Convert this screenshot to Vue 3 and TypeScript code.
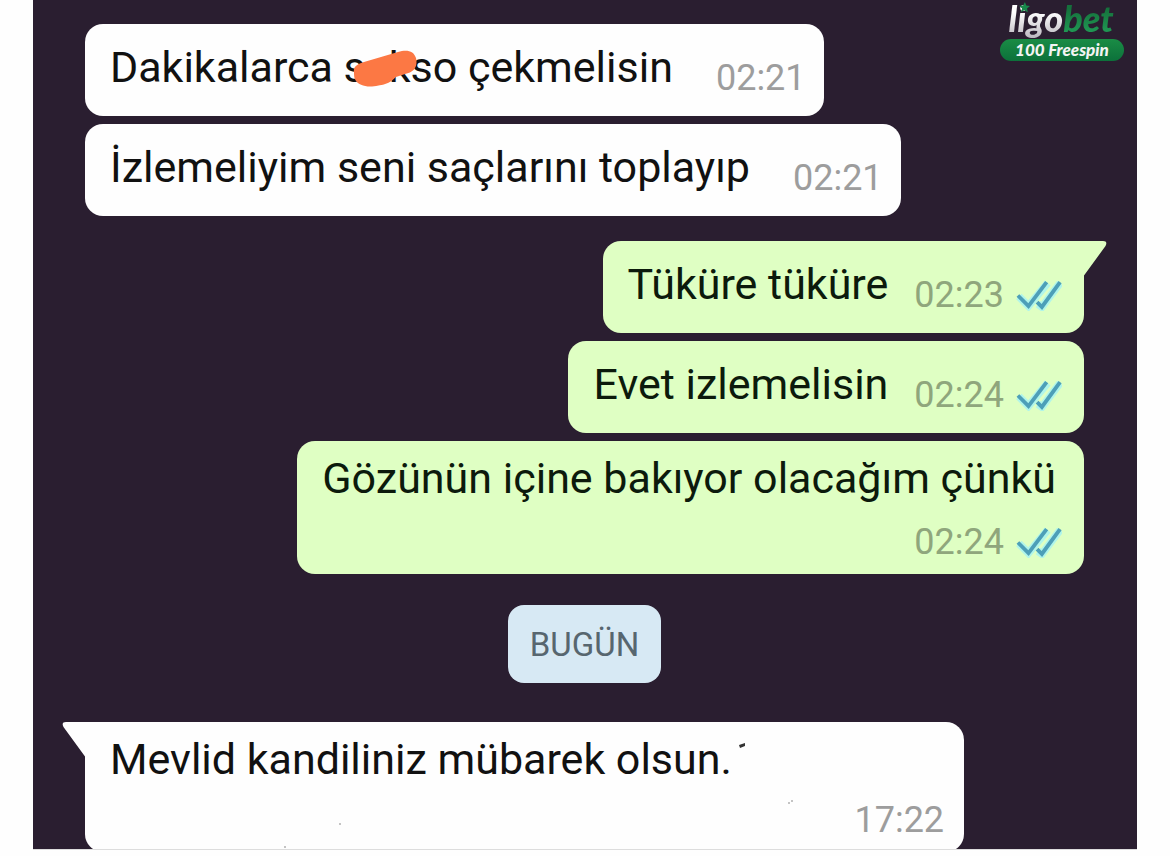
<script setup lang="ts">
interface Message {
  id: number
  parts: string[]
  time: string
  mine: boolean
  startsGroup?: boolean
  tail?: boolean
  stacked?: boolean
  wide?: boolean
}

const earlier: Message[] = [
  { id: 1, parts: ['Dakikalarca s', 'kso çekmelisin'], time: '02:21', mine: false },
  { id: 2, parts: ['İzlemeliyim seni saçlarını toplayıp'], time: '02:21', mine: false },
  { id: 3, parts: ['Tüküre tüküre'], time: '02:23', mine: true, startsGroup: true, tail: true },
  { id: 4, parts: ['Evet izlemelisin'], time: '02:24', mine: true },
  { id: 5, parts: ['Gözünün içine bakıyor olacağım çünkü'], time: '02:24', mine: true, stacked: true },
]

const today: Message[] = [
  { id: 6, parts: ['Mevlid kandiliniz mübarek olsun.'], time: '17:22', mine: false, tail: true, stacked: true, wide: true },
]

const days = [
  { label: '', messages: earlier },
  { label: 'BUGÜN', messages: today },
]
</script>

<template>
  <div class="page">
    <main class="chat">
      <aside class="sponsor">
        <div class="brand">
          <span class="brand-light">ligo</span><span class="brand-green">bet</span>
          <svg class="star" viewBox="0 0 10 10" aria-hidden="true">
            <path d="M5.4 0 6.6 3.2 10 3.6 7.3 5.8 8 9.4 5 7.5 1.8 9.2 2.8 5.8 0 3.3 3.8 3.2Z" />
          </svg>
        </div>
        <div class="promo">100 Freespin</div>
      </aside>

      <template v-for="(day, index) in days" :key="index">
        <div v-if="day.label" class="day">{{ day.label }}</div>
        <article
          v-for="message in day.messages"
          :key="message.id"
          class="bubble"
          :class="{
            mine: message.mine,
            group: message.startsGroup,
            stacked: message.stacked,
            wide: message.wide,
          }"
        >
          <svg v-if="message.tail" class="tail" viewBox="0 0 42 36" aria-hidden="true">
            <path d="M0 0H38Q43 0 40.5 5L19 34.500V36H0Z" />
          </svg>
          <p class="text"><template v-for="(part, i) in message.parts" :key="i"><span v-if="i > 0" class="mask"><svg class="blot" viewBox="0 0 64 38" aria-hidden="true"><path d="M1 22C0 17 4 14 11 12L45 2C54-1 61 1 63 8C65 17 61 22 52 24L43 27C36 34 31 35 19 36.500C11 37 5 34 3 31C1 28 1 26 1 22Z" /></svg></span>{{ part }}</template></p>
          <div class="meta">
            <time>{{ message.time }}</time>
            <svg v-if="message.mine" class="ticks" viewBox="0 0 48 32" role="img" aria-label="Okundu">
              <g class="glow"><path d="M3 17 13 27 33 3M23 25 27 28 46 3" /></g>
              <g class="line"><path d="M2 16 13 27 32 2M22 23 27 28 46 2" /></g>
            </svg>
          </div>
          <svg v-if="message.wide" class="specks" viewBox="0 0 520 110" aria-hidden="true">
            <path class="dark" d="M455 5 461 3V6L456 8Z" />
            <circle cx="505" cy="63" r="1" />
            <circle cx="508" cy="61" r="1" />
            <circle cx="56" cy="84" r="1" />
            <circle cx="1" cy="107" r="1" />
          </svg>
        </article>
      </template>
    </main>
  </div>
</template>

<style>
body {
  margin: 0;
  background: #fefefe;
}
</style>

<style scoped>
.page {
  padding: 0 33px;
}

.chat {
  position: relative;
  box-sizing: border-box;
  height: calc(100vh - 6px);
  padding: 24px 53px 0 52px;
  overflow: hidden;
  display: flex;
  flex-direction: column;
  align-items: flex-start;
  gap: 8px;
  border-bottom: 1px solid #dddddd;
  background: #2a1e30;
  font-family: Roboto, "Liberation Sans", sans-serif;
}

.bubble {
  position: relative;
  flex: none;
  box-sizing: border-box;
  display: flex;
  align-items: flex-start;
  gap: 43px;
  min-height: 92px;
  padding: 17px 18px 0 25px;
  border-radius: 18px;
  background: #fefefe;
  color: #111111;
}

.mine {
  align-self: flex-end;
  gap: 26px;
  padding-right: 22px;
  background: #dfffc3;
  color: #0c1a0c;
}

.group {
  margin-top: 17px;
}

.stacked {
  flex-direction: column;
  gap: 16px;
  padding-top: 11px;
  padding-bottom: 10px;
}

.wide {
  width: 88%;
  gap: 13px;
  padding-right: 20px;
}

.text {
  margin: 0;
  font-size: 43px;
  line-height: 52px;
  white-space: nowrap;
}

.mine.stacked .text {
  padding-right: 6px;
}

.meta {
  display: flex;
  align-items: center;
  gap: 12px;
  margin-top: 15px;
  color: #9d9d9d;
  font-size: 36px;
  line-height: 44px;
}

.stacked .meta {
  align-self: flex-end;
  margin-top: 0;
}

.mine .meta {
  color: #8fa67c;
}

.ticks {
  width: 46px;
  height: 31px;
  fill: none;
}

.glow {
  stroke: #b0f5ea;
  stroke-width: 8;
}

.line {
  stroke: #4d9fb8;
  stroke-width: 4;
}

.tail {
  position: absolute;
  top: 0;
  right: -23px;
  width: 42px;
  height: 36px;
  fill: #dfffc3;
}

.bubble:not(.mine) .tail {
  right: auto;
  left: -23px;
  transform: scaleX(-1);
  fill: #fefefe;
}

.mask {
  position: relative;
  display: inline-block;
  width: 23px;
}

.blot {
  position: absolute;
  left: -13px;
  bottom: -6px;
  width: 64px;
  height: 38px;
  fill: #fc7844;
}

.specks {
  position: absolute;
  top: 18px;
  left: 199px;
  width: 520px;
  height: 110px;
  fill: #b0b0b0;
}

.dark {
  fill: #333333;
}

.day {
  align-self: center;
  margin-top: 23px;
  margin-bottom: 31px;
  padding: 18px 22px 16px;
  border-radius: 16px;
  background: #d7e9f4;
  color: #57666f;
  font-size: 33px;
  line-height: 44px;
}

.sponsor {
  position: absolute;
  top: 1px;
  right: 13px;
  width: 124px;
  font-family: Lato, "Open Sans", sans-serif;
  font-style: italic;
  font-weight: 900;
  text-align: center;
}

.brand {
  position: relative;
  display: flex;
  justify-content: center;
  height: 38px;
  font-size: 36px;
  line-height: 34px;
}

.brand-light,
.brand-green {
  padding-bottom: 4px;
  background: linear-gradient(#ffffff 30%, #b9b5bd);
  background-clip: text;
  color: transparent;
}

.brand-green {
  padding-right: 2px;
  background-image: linear-gradient(#15713c 20%, #23a35a);
}

.star {
  position: absolute;
  top: 1px;
  left: 19px;
  width: 11px;
  height: 11px;
  fill: #18884a;
}

.promo {
  border-radius: 11px;
  background: linear-gradient(#1a8c45, #0c713a);
  color: #f4f4f4;
  font-size: 17px;
  line-height: 22px;
}
</style>
